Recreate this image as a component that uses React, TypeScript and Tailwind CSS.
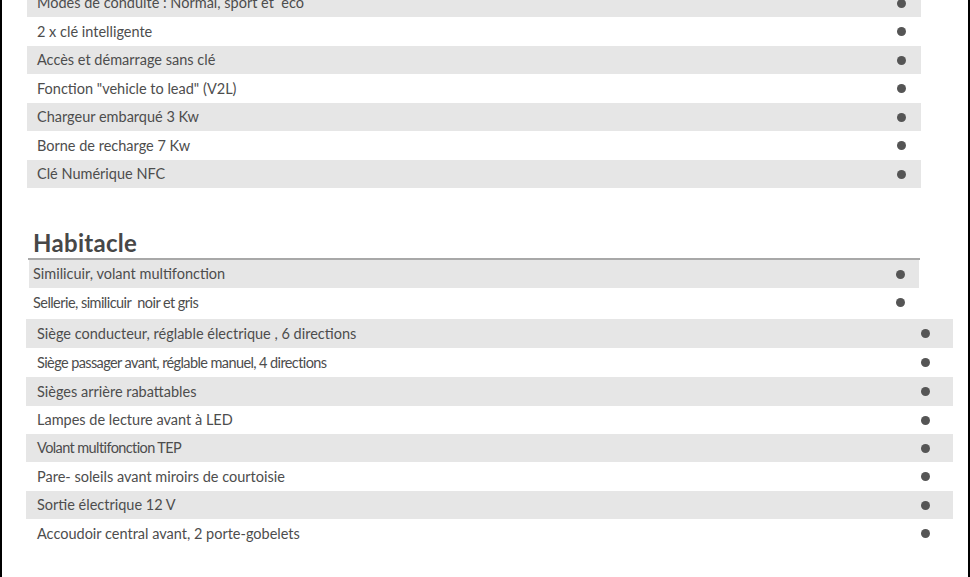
import React from "react";

const font = { fontFamily: "Lato, 'Noto Sans', sans-serif" };

function Dot() {
  return <span className="block w-[9px] h-[9px] rounded-full bg-[#555555]" />;
}

type Row = { t: string; c?: boolean };

const top: Row[] = [
  { t: "Modes de conduite : Normal, sport et  eco" },
  { t: "2 x clé intelligente" },
  { t: "Accès et démarrage sans clé" },
  { t: "Fonction \"vehicle to lead\" (V2L)" },
  { t: "Chargeur embarqué 3 Kw" },
  { t: "Borne de recharge 7 Kw" },
  { t: "Clé Numérique NFC" },
];

const hab2: Row[] = [
  { t: "Siège conducteur, réglable électrique , 6 directions" },
  { t: "Siège passager avant, réglable manuel, 4 directions", c: true },
  { t: "Sièges arrière rabattables" },
  { t: "Lampes de lecture avant à LED" },
  { t: "Volant multifonction TEP", c: true },
  { t: "Pare- soleils avant miroirs de courtoisie" },
  { t: "Sortie électrique 12 V" },
  { t: "Accoudoir central avant, 2 porte-gobelets" },
];

export default function App() {
  return (
    <div
      className="w-[970px] h-[577px] overflow-hidden bg-white border-l-2 border-r-2 border-black text-[#4d4d4d]"
      style={font}
    >
      {/* top section */}
      <div className="ml-[25px] w-[894px] -mt-[11px] flex flex-col">
        {top.map((r, i) => (
          <div
            key={i}
            className={`flex items-center justify-between pl-[10px] pr-[15px] text-[14.5px] whitespace-pre ${
              i % 2 === 0 ? "h-[28px] bg-[#e6e6e6]" : "h-[29px] bg-white"
            }`}
          >
            <span>{r.t}</span>
            <Dot />
          </div>
        ))}
      </div>

      {/* heading */}
      <div className="ml-[26px] w-[892px] mt-[42px] border-b-2 border-[#a8a8a8] pb-[2px]">
        <h2 className="pl-[5px] text-[24px] leading-[26px] font-bold text-[#474747] tracking-[0.3px]">
          Habitacle
        </h2>
      </div>

      <div className="ml-[27px] w-[890px] flex flex-col">
        <div className="h-[28px] bg-[#e6e6e6] flex items-center justify-between pl-[4px] pr-[14px] text-[14.5px]">
          <span>Similicuir, volant multifonction</span>
          <Dot />
        </div>
        <div className="h-[31px] bg-white flex items-center justify-between pl-[4px] pr-[14px] pb-[2px] text-[14.5px] tracking-[-0.55px] whitespace-pre">
          <span>Sellerie, similicuir  noir et gris</span>
          <Dot />
        </div>
      </div>

      <div className="ml-[24px] w-[927px] flex flex-col">
        {hab2.map((r, i) => (
          <div
            key={i}
            className={`flex items-center justify-between pl-[11px] pr-[23px] ${
              r.c ? "text-[14.5px] tracking-[-0.6px]" : "text-[14.5px]"
            } ${i % 2 === 0 ? "bg-[#e6e6e6]" : "bg-white"} ${
              i === 3 || i === 4 || i === 6 ? "h-[28px]" : "h-[29px]"
            }`}
          >
            <span>{r.t}</span>
            <Dot />
          </div>
        ))}
      </div>
    </div>
  );
}
